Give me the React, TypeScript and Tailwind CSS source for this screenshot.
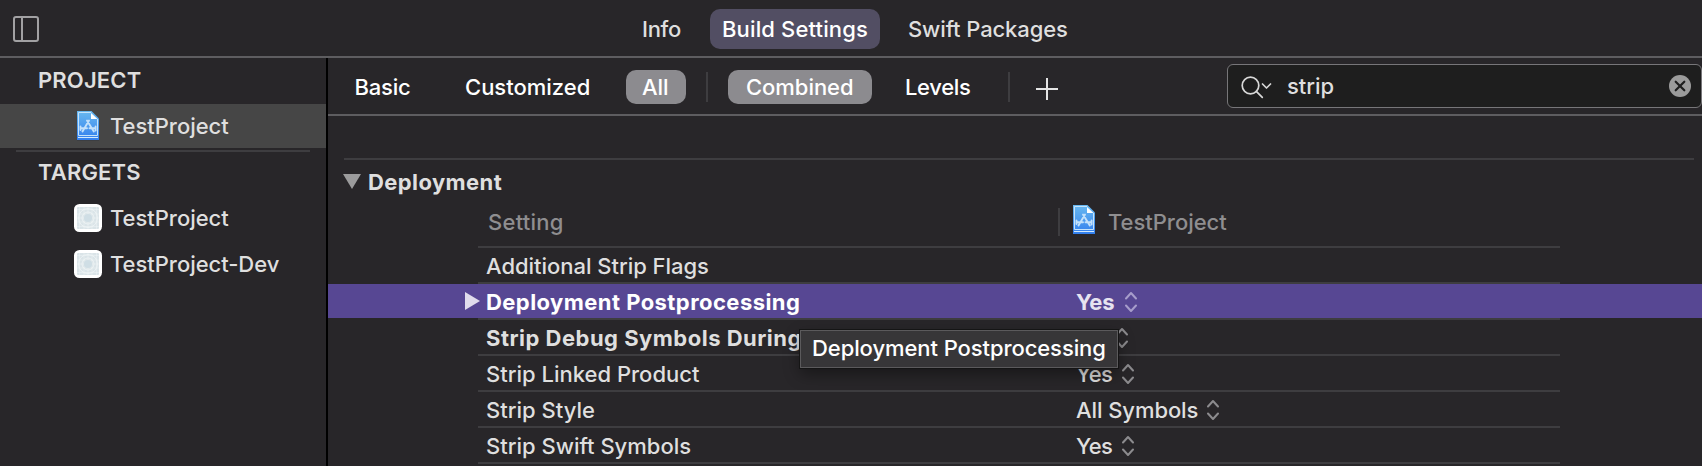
type Setting = {
  name: string;
  nameClass: string;
  value?: string;
  valueClass?: string;
  selected?: boolean;
};

const settings: Setting[] = [
  { name: "Additional Strip Flags", nameClass: "tracking-[-0.03px]" },
  {
    name: "Deployment Postprocessing",
    nameClass: "font-bold text-white tracking-[0.44px]",
    value: "Yes",
    valueClass: "w-[49px] font-bold tracking-[-0.3px] text-[#e6e3f0]",
    selected: true,
  },
  {
    name: "Strip Debug Symbols During Copy",
    nameClass: "font-bold tracking-[0.49px]",
    value: "No",
    valueClass: "w-[40px] font-bold",
  },
  {
    name: "Strip Linked Product",
    nameClass: "tracking-normal",
    value: "Yes",
    valueClass: "w-[46px] tracking-[-0.7px]",
  },
  {
    name: "Strip Style",
    nameClass: "tracking-normal",
    value: "All Symbols",
    valueClass: "w-[131px] tracking-[-0.08px]",
  },
  {
    name: "Strip Swift Symbols",
    nameClass: "tracking-normal",
    value: "Yes",
    valueClass: "w-[46px] tracking-[-0.7px]",
  },
];

function ProjectIcon() {
  return (
    <svg className="block h-[30px] w-6 shrink-0" viewBox="0 0 24 30">
      <defs>
        <linearGradient id="doc" x1="0" y1="0" x2="0" y2="1">
          <stop offset="0" stopColor="#69b9f0" />
          <stop offset="1" stopColor="#327fee" />
        </linearGradient>
      </defs>
      <path d="M1 .5h14.5L23 8v21.5H1z" fill="#1f2a38" opacity=".5" />
      <path d="M1 0h14.5L23 7.5V29H1z" fill="url(#doc)" />
      <path d="M15 1.5H2.5v23h19V8" fill="none" stroke="#c5e3fb" strokeWidth="1" />
      <path d="M2 26.5h20" stroke="#d3eafc" strokeWidth="1" />
      <path d="M15 2v6h6.5z" fill="#fff" />
      <path
        d="M13 9.5 6.5 20.5M11 9.5 17.8 20.5M4.5 17.3h6.5M13.5 17.3h6M4.5 15.5v3.5M19.6 15.5v4"
        fill="none"
        stroke="#c3e1fb"
        strokeWidth="1.9"
        strokeLinecap="round"
      />
    </svg>
  );
}

function TargetIcon() {
  return (
    <svg className="block size-7 shrink-0" viewBox="0 0 28 28">
      <rect width="28" height="28" rx="5.5" fill="#fff" />
      <rect x="3" y="3" width="22" height="22" rx="1" fill="#dae4e8" />
      <g fill="none" stroke="#f0f5f6" strokeWidth=".8">
        <path d="M5.5 3v22M10 3v22M14 3v22M18 3v22M22.5 3v22M3 5.5h22M3 10h22M3 14h22M3 18h22M3 22.5h22" opacity=".6" />
        <circle cx="14" cy="14" r="9.5" />
        <circle cx="14" cy="14" r="6" />
      </g>
      <circle cx="14" cy="14" r="4" fill="#cfdee5" />
    </svg>
  );
}

function Stepper({ color }: { color: string }) {
  return (
    <svg className={`h-[22px] w-3 shrink-0 ${color}`} viewBox="0 0 12 22" fill="none" stroke="currentColor" strokeWidth="2" strokeLinecap="round" strokeLinejoin="round">
      <path d="M1 7.5 6 2l5 5.5M1 14.5 6 20l5-5.5" />
    </svg>
  );
}

function Sidebar() {
  return (
    <aside className="w-[328px] shrink-0 border-r-2 border-black leading-[44px]">
      <h2 className="h-[46px] pl-[38px] font-semibold tracking-[0.15px]">PROJECT</h2>
      <div className="flex h-11 bg-[#464646] pl-[76px]">
        <div className="mt-[7px]">
          <ProjectIcon />
        </div>
        <span className="ml-2.5 tracking-[-0.04px]">TestProject</span>
      </div>
      <div className="mt-0.5 mr-4 ml-4 h-0.5 bg-[#3e3d40]" />
      <h2 className="h-[43px] pl-[38px] font-semibold leading-[40px] tracking-[0.15px]">TARGETS</h2>
      <div className="flex h-[46px] items-center gap-2 pl-[74px]">
        <TargetIcon />
        <span className="tracking-[-0.04px]">TestProject</span>
      </div>
      <div className="flex h-[46px] items-center gap-2 pl-[74px]">
        <TargetIcon />
        <span className="tracking-[-0.04px]">TestProject-Dev</span>
      </div>
    </aside>
  );
}

function Toolbar() {
  return (
    <div className="flex h-[58px] items-start border-b-2 border-[#5e5d60] pt-3 font-medium leading-[34px] text-white">
      <span className="ml-[26.5px] w-[110.5px] tracking-[-0.21px]">Basic</span>
      <span className="w-[161px]">Customized</span>
      <span className="h-[34px] w-[60px] rounded-[10px] bg-[#8c8b8f] pl-4 tracking-[-0.07px]">All</span>
      <div className="mt-0.5 ml-5 h-[30px] w-0.5 bg-[#3e3d40]" />
      <span className="ml-5 h-[34px] w-36 rounded-[10px] bg-[#8c8b8f] pl-[18px] tracking-[-0.04px]">Combined</span>
      <span className="ml-[33px] w-[103px] tracking-[-0.33px]">Levels</span>
      <div className="mt-0.5 h-[30px] w-0.5 bg-[#3e3d40]" />
      <svg className="mt-2 ml-[26px] size-[22px]" viewBox="0 0 22 22">
        <path d="M11 0v22M0 11h22" stroke="#e4e4e4" strokeWidth="2" />
      </svg>
      <div className="-mt-1.5 ml-auto flex h-11 w-[475px] items-start rounded-md border border-[#777679] bg-[#1e1e1e]">
        <svg className="mt-[11px] ml-[13px] h-[23px] w-[32px]" viewBox="0 0 32 23" fill="none" stroke="#d8d8d8" strokeWidth="1.7" strokeLinecap="round" strokeLinejoin="round">
          <circle cx="9.5" cy="9.5" r="8.3" />
          <path d="m15.3 15.3 6 6M21.5 8l4 4 4-4" />
        </svg>
        <span className="ml-[14px] leading-[42px] tracking-[-0.04px] text-[#dfdfdf]">strip</span>
        <svg className="mt-2.5 mr-2.5 ml-auto size-[22px]" viewBox="0 0 22 22">
          <circle cx="11" cy="11" r="11" fill="#9b9b9b" />
          <path d="m6.7 6.7 8.6 8.6M15.3 6.7l-8.6 8.6" stroke="#1e1e1e" strokeWidth="2.2" strokeLinecap="round" />
        </svg>
      </div>
    </div>
  );
}

function SettingRow({ name, nameClass, value, valueClass, selected }: Setting) {
  return (
    <div className={selected ? "bg-[#574793]" : ""}>
      <div className="flex h-[34px] items-start">
        <div className="flex w-[158px] justify-end pr-[6px]">
          {selected && (
            <svg className="mt-2 h-[18px] w-[15px]" viewBox="0 0 15 18">
              <path d="M0 0 15 9 0 18z" fill="#e0dcec" />
            </svg>
          )}
        </div>
        <span className={`w-[590px] shrink-0 whitespace-nowrap leading-[36px] ${nameClass}`}>{name}</span>
        {value && (
          <>
            <span className={`whitespace-nowrap leading-[36px] ${valueClass}`}>{value}</span>
            <div className="mt-[7px]">
              <Stepper color={selected ? "text-[#a79dcb]" : "text-[#8c8b8e]"} />
            </div>
          </>
        )}
      </div>
      <div className="h-0.5 bg-[#282629]">
        <div className="ml-[150px] h-0.5 w-[1082px] bg-[#3e3d40]" />
      </div>
    </div>
  );
}

export default function App() {
  return (
    <div className="h-[466px] w-[1702px] overflow-hidden bg-[#282629] font-['Inter',sans-serif] text-[22px] font-[450] text-[#dfdfdf]">
      <header className="flex h-[58px] items-start border-b-2 border-[#5e5d60] pt-[9px] font-medium leading-[40px]">
        <svg className="mt-[7px] ml-[13px] size-[26px]" viewBox="0 0 26 26" fill="none" stroke="#a2a1a3" strokeWidth="2">
          <rect x="1" y="1" width="24" height="24" rx="2" />
          <path d="M9 1v24" />
        </svg>
        <span className="ml-[603px] w-[68px] tracking-[-0.33px]">Info</span>
        <span className="h-10 w-[170px] rounded-[10px] bg-[#524e63] pl-3 tracking-[0.14px] text-white">Build Settings</span>
        <span className="ml-7 tracking-[-0.11px]">Swift Packages</span>
      </header>
      <div className="flex h-[408px]">
        <Sidebar />
        <main className="min-w-0 flex-1">
          <Toolbar />
          <section className="relative pt-[42px]">
            <div className="mr-2 ml-4 h-0.5 bg-[#3e3d40]" />
            <div className="flex h-11 items-start pl-[15px]">
              <svg className="mt-3.5 h-[15px] w-[18px]" viewBox="0 0 18 15">
                <path d="M0 0h18L9 15z" fill="#9b9b9c" />
              </svg>
              <h3 className="ml-[7px] font-bold leading-[44px] tracking-[0.4px]">Deployment</h3>
            </div>
            <div className="flex h-[42px] items-start leading-[36px] text-[#8f8e90]">
              <span className="ml-[160px] w-[570px] tracking-[0.25px]">Setting</span>
              <div className="mt-1 h-7 w-0.5 bg-[#3e3d40]" />
              <div className="mt-px ml-3">
                <ProjectIcon />
              </div>
              <span className="ml-3 tracking-[-0.04px]">TestProject</span>
            </div>
            <div className="ml-[150px] h-0.5 w-[1082px] bg-[#3e3d40]" />
            {settings.map((s) => (
              <SettingRow key={s.name} {...s} />
            ))}
            <div className="absolute top-[214px] left-[472px] h-[38px] w-[318px] border border-[#5b5a5c] bg-[#373638] pl-[11px] leading-[34px] tracking-[-0.08px] text-white shadow-[0_0_0_1px_#151515,0_6px_16px_rgba(0,0,0,0.4)]">
              Deployment Postprocessing
            </div>
          </section>
        </main>
      </div>
    </div>
  );
}
